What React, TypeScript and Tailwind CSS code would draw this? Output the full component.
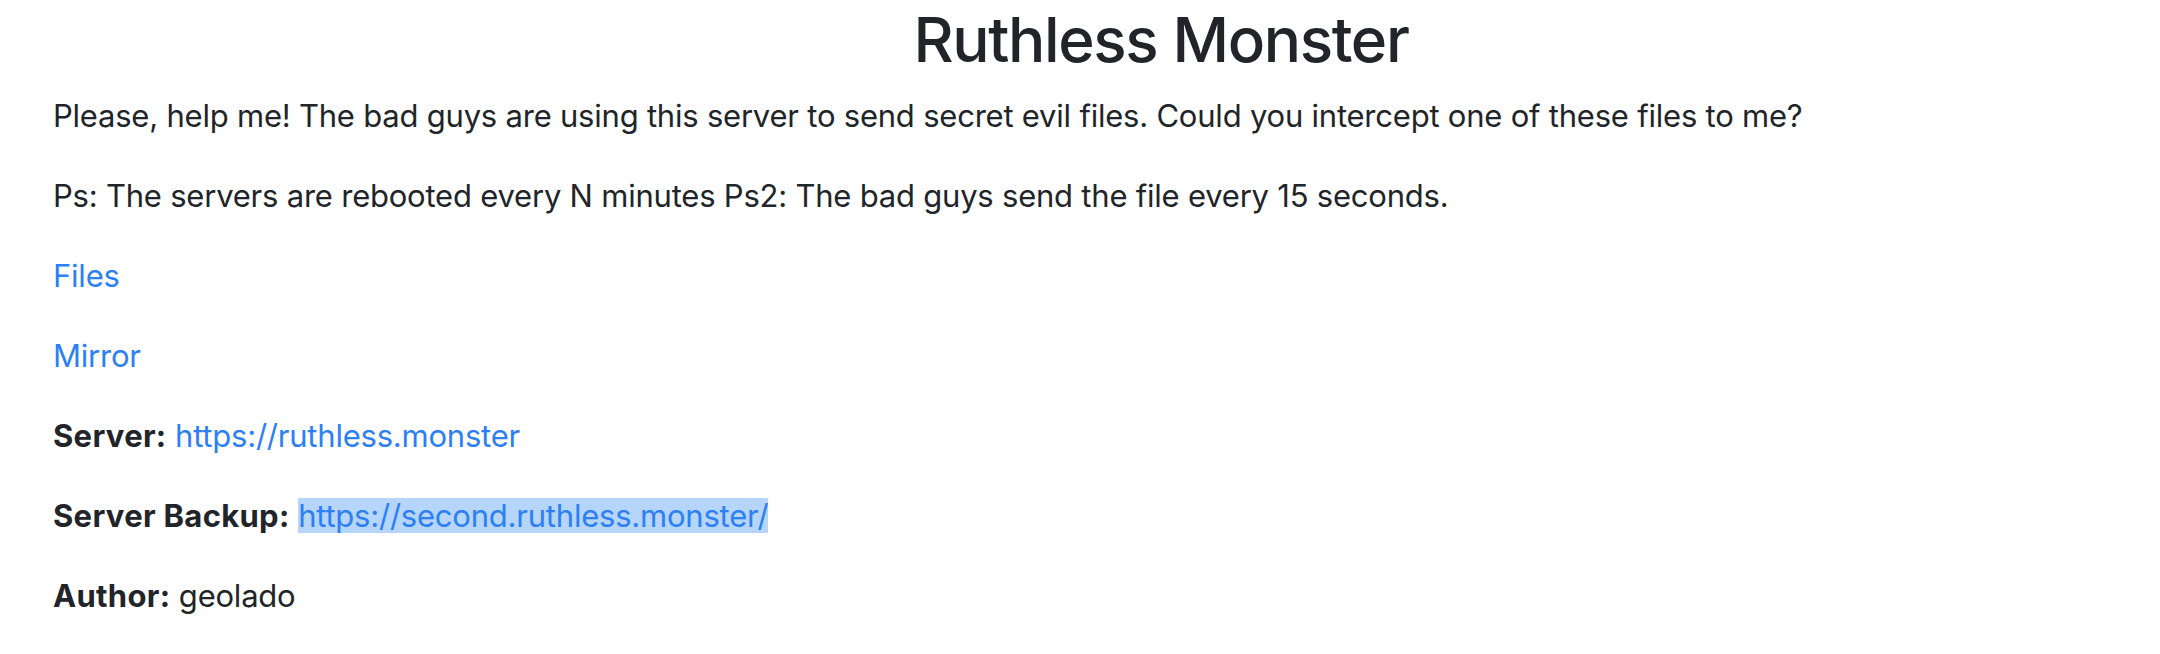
export default function App() {
  const font = { fontFamily: "Inter, 'Noto Sans', sans-serif" };
  return (
    <div className="min-h-[654px] w-[2160px] bg-white text-[#212529]" style={font}>
      <div className="pl-[162px] pt-[3px] text-center">
        <h1 className="m-0 text-[62px] font-medium leading-[74px] tracking-[-0.022em] text-[#212529]">Ruthless Monster</h1>
      </div>
      <div className="pl-[53px] pt-[15px] text-[31px] leading-[48px] tracking-[-0.007em]">
        <p className="mb-[32px]">Please, help me! The bad guys are using this server to send secret evil files. Could you intercept one of these files to me?</p>
        <p className="mb-[32px]">Ps: The servers are rebooted every N minutes Ps2: The bad guys send the file every 15 seconds.</p>
        <p className="mb-[32px]"><a className="text-[#2c7ff6]" href="#">Files</a></p>
        <p className="mb-[32px]"><a className="text-[#2c7ff6]" href="#">Mirror</a></p>
        <p className="mb-[32px]"><b className="font-bold tracking-[0.01em]">Server:</b> <a className="text-[#2c7ff6]" href="#">https://ruthless.monster</a></p>
        <p className="mb-[32px]"><b className="font-bold tracking-[0.01em]">Server Backup:</b> <span className="inline-block h-[35px] bg-[#b5d5fb] leading-[35px]"><a className="text-[#2c7ff6]" href="#">https://second.ruthless.monster/</a></span></p>
        <p className="mb-[32px]"><b className="font-bold tracking-[0.01em]">Author:</b> geolado</p>
      </div>
    </div>
  );
}
